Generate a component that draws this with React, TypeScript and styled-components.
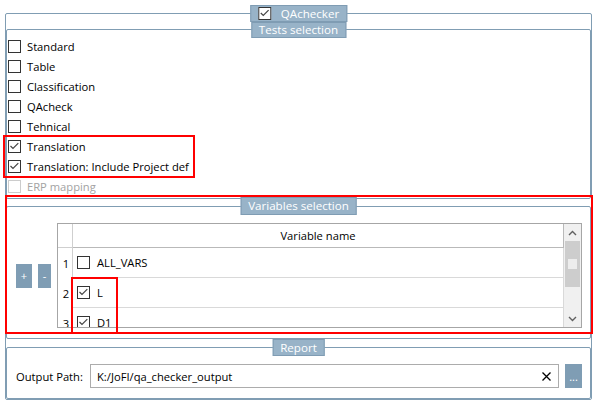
import React from 'react';
import styled, { createGlobalStyle } from 'styled-components';

const GlobalStyle = createGlobalStyle`
  html, body { margin: 0; padding: 0; background: #ffffff; }
  body {
    font-family: "Open Sans", "Noto Sans", sans-serif;
    font-size: 11.2px;
    color: #000000;
  }
  * { box-sizing: border-box; }
`;

const Page = styled.div`
  position: relative;
  width: 599px;
  height: 404px;
  overflow: hidden;
  padding: 5px 7px 0 5px;
`;

/* ---------- group box ---------- */

const Section = styled.section<{ $offset: number; $pull?: number }>`
  position: relative;
  padding-top: ${p => p.$offset}px;
  margin-top: ${p => -(p.$pull ?? 0)}px;
`;

const Frame = styled.div<{ $pad?: string }>`
  border: 1px solid #809db3;
  border-radius: 2px;
  padding: ${p => p.$pad ?? '0'};
`;

const Legend = styled.div<{ $h: number }>`
  position: absolute;
  top: 0;
  left: 50%;
  transform: translateX(-50%);
  z-index: 2;
  height: ${p => p.$h}px;
  padding: 0 7px;
  display: flex;
  align-items: center;
  gap: 10px;
  background: #98b3c8;
  border: 1px solid #7f9cb3;
  color: #ffffff;
  font-size: 11.6px;
  white-space: nowrap;
  line-height: 1;
`;

/* ---------- check box ---------- */

const Box = styled.span<{ $disabled?: boolean }>`
  flex: none;
  width: 13px;
  height: 13px;
  border: 1px solid ${p => (p.$disabled ? '#cccccc' : '#333333')};
  background: #ffffff;
  display: inline-flex;
  align-items: center;
  justify-content: center;
`;

function CheckBox({ checked, disabled }: { checked?: boolean; disabled?: boolean }) {
  return (
    <Box $disabled={disabled}>
      {checked && (
        <svg width="11" height="11" viewBox="0 0 11 11">
          <polyline points="1.5,5 4,7.5 9.3,2.2" fill="none" stroke="#444444" strokeWidth="1.2" />
        </svg>
      )}
    </Box>
  );
}

/* ---------- tests list ---------- */

const TestList = styled.div`
  padding: 6px 0 2px 1px;
  display: flex;
  flex-direction: column;
`;

const TestRow = styled.label<{ $disabled?: boolean }>`
  height: 20px;
  display: flex;
  align-items: center;
  gap: 6px;
  color: ${p => (p.$disabled ? '#a3a3a3' : '#000000')};
`;

/* ---------- variables ---------- */

const VarBody = styled.div`
  display: flex;
  align-items: center;
  padding: 16px 8px 10px 9px;
  gap: 6px;
`;

const SmallButton = styled.button<{ $w: number }>`
  width: ${p => p.$w}px;
  height: 24px;
  border: none;
  padding: 0;
  background: #7f9db4;
  color: #ffffff;
  font-family: inherit;
  font-size: 11px;
  display: flex;
  align-items: center;
  justify-content: center;
`;

const Table = styled.div`
  flex: 1;
  height: 105px;
  border: 1px solid #a6a6a6;
  display: flex;
  overflow: hidden;
`;

const Grid = styled.div`
  flex: 1;
  display: grid;
  grid-template-columns: 15px 1fr;
  grid-auto-rows: 30px;
  grid-template-rows: 24px;
  align-content: start;
`;

const Corner = styled.div`
  border-right: 1px solid #cfcfcf;
  border-bottom: 1px solid #cfcfcf;
`;

const HeadCell = styled.div`
  border: 1px solid #b9b9b9;
  border-top: none;
  border-left: none;
  display: flex;
  align-items: center;
  justify-content: center;
`;

const RowHead = styled.div`
  border-right: 1px solid #cfcfcf;
  display: flex;
  align-items: center;
  justify-content: center;
  padding-left: 2px;
`;

const Cell = styled.div`
  border-bottom: 1px solid #d9d9d9;
  border-right: 1px solid #d9d9d9;
  display: flex;
  align-items: center;
  gap: 7px;
  padding-left: 4px;
`;

const ScrollBar = styled.div`
  width: 17px;
  flex: none;
  background: #f0f0f0;
  display: flex;
  flex-direction: column;
  align-items: center;
`;

const ArrowSlot = styled.div`
  height: 17px;
  width: 100%;
  display: flex;
  align-items: center;
  justify-content: center;
`;

const Track = styled.div`
  flex: 1;
  width: 100%;
  padding: 0 1px;
`;

const Thumb = styled.div`
  height: 46px;
  background: #cdcdcd;
  display: flex;
  align-items: center;
  justify-content: center;
`;

const Grip = styled.div`
  width: 9px;
  height: 10px;
  background: #ededed;
`;

function Chevron({ up }: { up?: boolean }) {
  return (
    <svg width="9" height="6" viewBox="0 0 9 6">
      <polyline
        points={up ? '1,5 4.5,1.5 8,5' : '1,1 4.5,4.5 8,1'}
        fill="none"
        stroke="#606060"
        strokeWidth="1.4"
      />
    </svg>
  );
}

/* ---------- report ---------- */

const ReportBody = styled.div`
  display: flex;
  align-items: center;
  padding: 16px 8px 10px 9px;
  gap: 6px;
`;

const FieldLabel = styled.span`
  width: 68px;
  flex: none;
  white-space: nowrap;
`;

const PathInput = styled.div`
  flex: 1;
  height: 24px;
  border: 1px solid #acacac;
  display: flex;
  align-items: center;
  padding: 0 7px 0 6px;
`;

const PathText = styled.span`
  flex: 1;
`;

/* ---------- annotations ---------- */

const Mark = styled.div<{ $x: number; $y: number; $w: number; $h: number }>`
  position: absolute;
  left: ${p => p.$x}px;
  top: ${p => p.$y}px;
  width: ${p => p.$w}px;
  height: ${p => p.$h}px;
  border: 2px solid #ff0000;
  pointer-events: none;
  z-index: 5;
`;

const tests = [
  { label: 'Standard' },
  { label: 'Table' },
  { label: 'Classification' },
  { label: 'QAcheck' },
  { label: 'Tehnical' },
  { label: 'Translation', checked: true },
  { label: 'Translation: Include Project def', checked: true },
  { label: 'ERP mapping', disabled: true },
];

const variables = [
  { name: 'ALL_VARS', checked: false },
  { name: 'L', checked: true },
  { name: 'D1', checked: true },
];

export default function App() {
  return (
    <>
      <GlobalStyle />
      <Page>
        <Section $offset={8}>
          <Legend $h={17}>
            <CheckBox checked />
            <span>QAchecker</span>
          </Legend>
          <Frame $pad="8px 0 0 0">
            <Section $offset={7}>
              <Legend $h={16}>Tests selection</Legend>
              <Frame>
                <TestList>
                  {tests.map(t => (
                    <TestRow key={t.label} $disabled={t.disabled}>
                      <CheckBox checked={t.checked} disabled={t.disabled} />
                      <span>{t.label}</span>
                    </TestRow>
                  ))}
                </TestList>
              </Frame>
            </Section>

            <Section $offset={9} $pull={2}>
              <Legend $h={18}>Variables selection</Legend>
              <Frame>
                <VarBody>
                  <SmallButton $w={16}>+</SmallButton>
                  <SmallButton $w={13}>-</SmallButton>
                  <Table>
                    <Grid>
                      <Corner />
                      <HeadCell>Variable name</HeadCell>
                      {variables.map((v, i) => (
                        <React.Fragment key={v.name}>
                          <RowHead>{i + 1}</RowHead>
                          <Cell>
                            <CheckBox checked={v.checked} />
                            <span>{v.name}</span>
                          </Cell>
                        </React.Fragment>
                      ))}
                    </Grid>
                    <ScrollBar>
                      <ArrowSlot>
                        <Chevron up />
                      </ArrowSlot>
                      <Track>
                        <Thumb>
                          <Grip />
                        </Thumb>
                      </Track>
                      <ArrowSlot>
                        <Chevron />
                      </ArrowSlot>
                    </ScrollBar>
                  </Table>
                </VarBody>
              </Frame>
            </Section>

            <Section $offset={8}>
              <Legend $h={17}>Report</Legend>
              <Frame>
                <ReportBody>
                  <FieldLabel>Output Path:</FieldLabel>
                  <PathInput>
                    <PathText>K:/JoFI/qa_checker_output</PathText>
                    <svg width="9" height="9" viewBox="0 0 9 9">
                      <path d="M0.5 0.5 L8.5 8.5 M8.5 0.5 L0.5 8.5" stroke="#000000" strokeWidth="1.3" />
                    </svg>
                  </PathInput>
                  <SmallButton $w={17}>...</SmallButton>
                </ReportBody>
              </Frame>
            </Section>
          </Frame>
        </Section>

        <Mark $x={3} $y={135} $w={192} $h={43} />
        <Mark $x={5} $y={195} $w={588} $h={139} />
        <Mark $x={71} $y={277} $w={47} $h={57} />
      </Page>
    </>
  );
}
